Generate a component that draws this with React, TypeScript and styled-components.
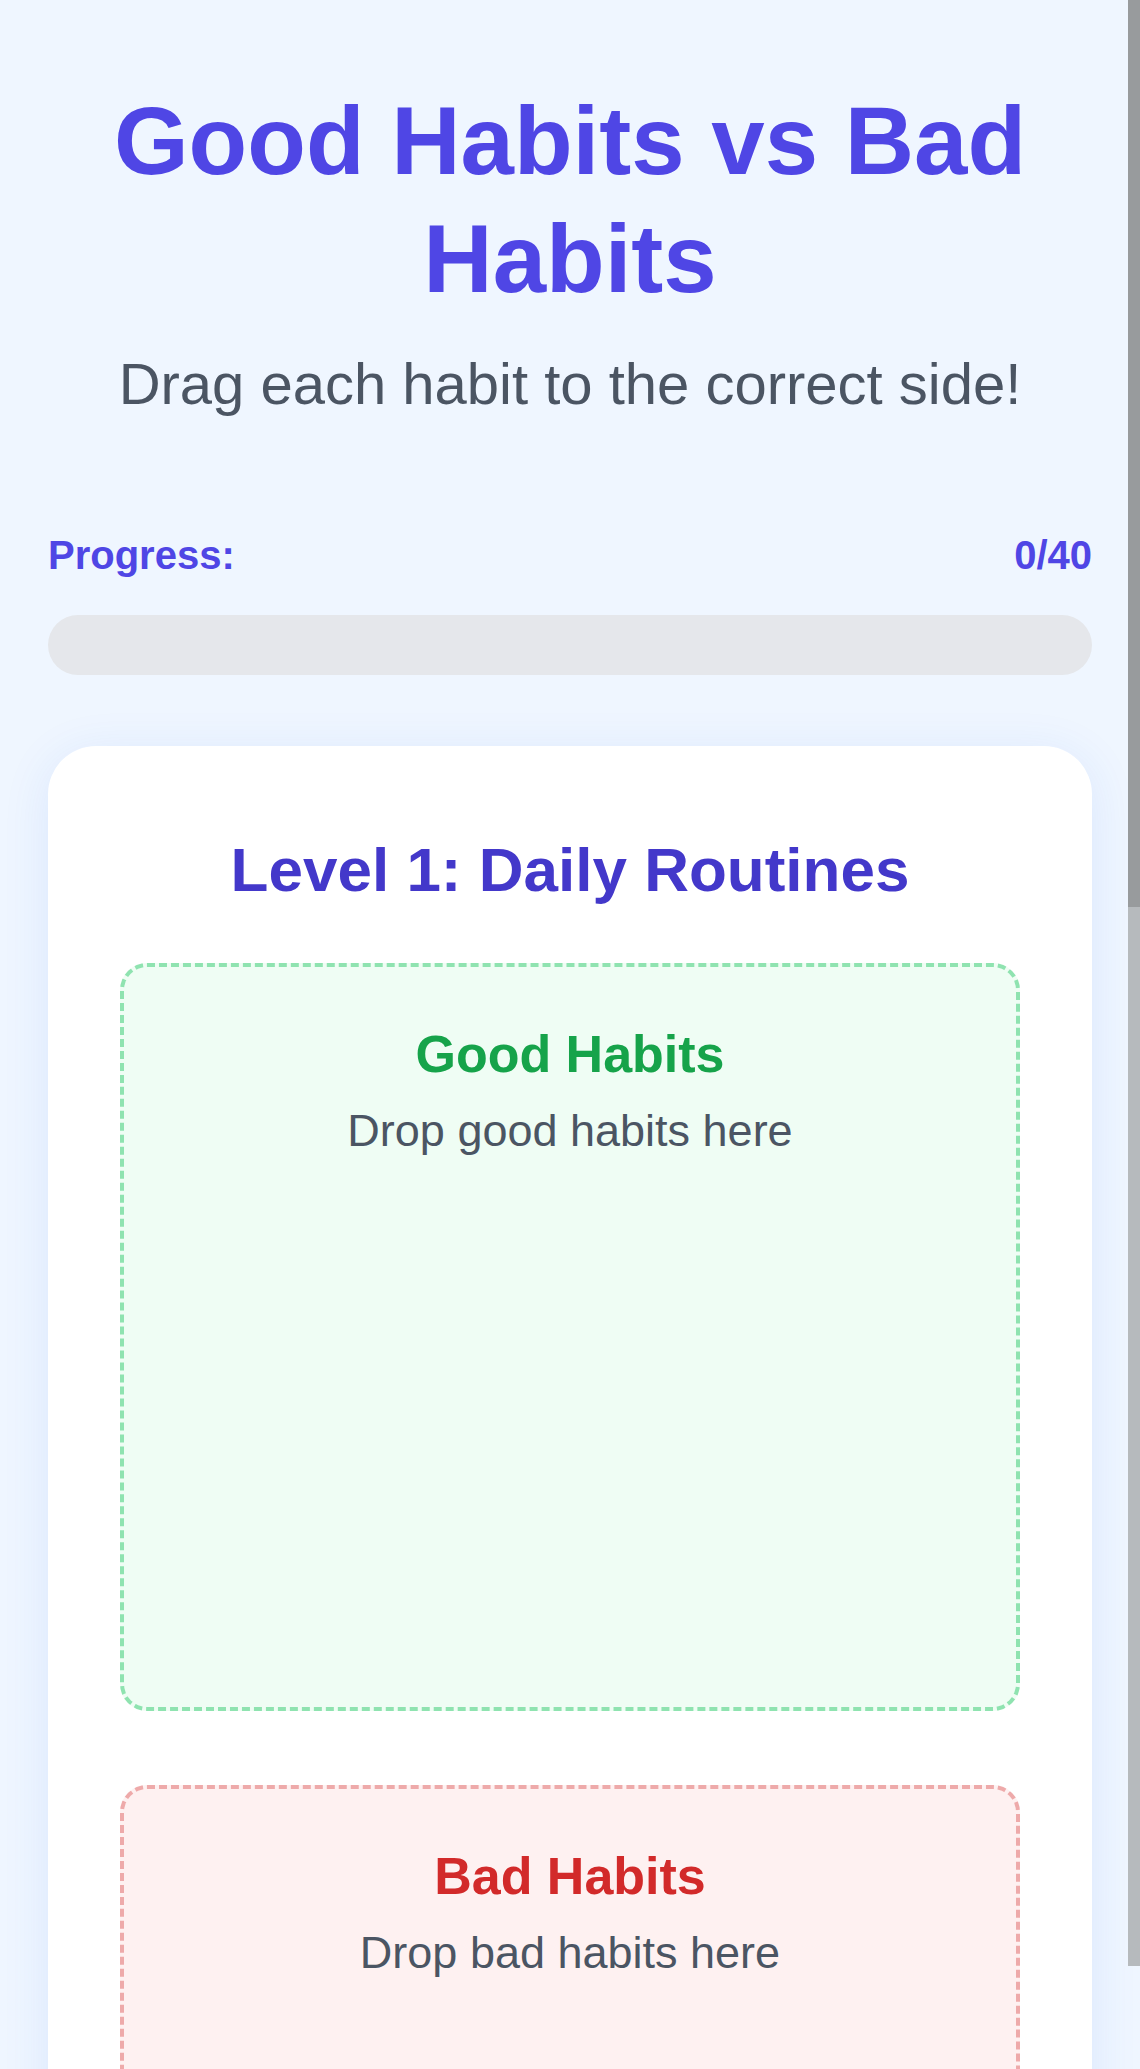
import React from 'react'
import styled, { createGlobalStyle } from 'styled-components'

const GlobalStyle = createGlobalStyle`
  html {
    scrollbar-width: none;
  }
  html::-webkit-scrollbar {
    display: none;
  }
  body {
    margin: 0;
    background-color: #eff6ff;
    font-family: "Liberation Sans", Arial, sans-serif;
  }
  * {
    box-sizing: border-box;
  }
`

const Page = styled.main`
  padding: 82px 48px 120px;
`

const Header = styled.header`
  text-align: center;
`

const Title = styled.h1`
  margin: 0;
  font-size: 96px;
  line-height: 117.5px;
  font-weight: 700;
  color: #4f46e5;
`

const Subtitle = styled.p`
  margin: 24px 0 0;
  font-size: 58px;
  line-height: 85px;
  color: #4b5563;
`

const ProgressRow = styled.div`
  display: flex;
  justify-content: space-between;
  margin-top: 99px;
  font-size: 40px;
  line-height: 60px;
  font-weight: 700;
  color: #4f46e5;
`

const ProgressTrack = styled.div`
  margin-top: 30px;
  height: 60px;
  border-radius: 999px;
  background-color: #e5e7eb;
  overflow: hidden;
`

const ProgressFill = styled.div`
  height: 100%;
  background-color: #6366f1;
`

const Card = styled.section`
  margin-top: 71px;
  padding: 77px 72px 72px;
  background-color: #ffffff;
  border-radius: 48px;
  box-shadow: 0 8px 48px rgba(37, 99, 235, 0.1);
`

const LevelTitle = styled.h2`
  margin: 0 0 47px;
  text-align: center;
  font-size: 62px;
  line-height: 93px;
  font-weight: 700;
  color: #4338ca;
`

const Zones = styled.div`
  display: flex;
  flex-direction: column;
  gap: 74px;
`

const DropZone = styled.div<{ $border: string; $bg: string }>`
  min-height: 748px;
  padding: 48px 24px;
  border: 4.5px dashed ${p => p.$border};
  border-radius: 27px;
  background-color: ${p => p.$bg};
  text-align: center;
`

const ZoneTitle = styled.h3<{ $color: string }>`
  margin: 0;
  font-size: 52px;
  line-height: 78px;
  font-weight: 700;
  color: ${p => p.$color};
`

const ZoneHint = styled.p`
  margin: 4px 0 0;
  font-size: 45px;
  line-height: 67.5px;
  color: #4b5563;
`

// page scroll indicator drawn over the right edge
const ScrollTrack = styled.div`
  position: fixed;
  top: 0;
  right: 0;
  width: 12px;
  height: 1966px;
  background-color: #b6babd;
`

const ScrollThumb = styled.div`
  height: 907px;
  background-color: #989b9d;
`

const zones = [
  {
    key: 'good',
    title: 'Good Habits',
    hint: 'Drop good habits here',
    border: '#8fe3b0',
    bg: '#effdf4',
    color: '#16a34a'
  },
  {
    key: 'bad',
    title: 'Bad Habits',
    hint: 'Drop bad habits here',
    border: '#eeaaaa',
    bg: '#fef1f1',
    color: '#d22a2a'
  }
]

const App: React.FC = () => {
  const placed = 0
  const total = 40

  return (
    <>
      <GlobalStyle />
      <Page>
        <Header>
          <Title>Good Habits vs Bad Habits</Title>
          <Subtitle>Drag each habit to the correct side!</Subtitle>
        </Header>

        <ProgressRow>
          <span>Progress:</span>
          <span>{placed}/{total}</span>
        </ProgressRow>
        <ProgressTrack>
          <ProgressFill style={{ width: `${(placed / total) * 100}%` }} />
        </ProgressTrack>

        <Card>
          <LevelTitle>Level 1: Daily Routines</LevelTitle>
          <Zones>
            {zones.map(z => (
              <DropZone key={z.key} $border={z.border} $bg={z.bg}>
                <ZoneTitle $color={z.color}>{z.title}</ZoneTitle>
                <ZoneHint>{z.hint}</ZoneHint>
              </DropZone>
            ))}
          </Zones>
        </Card>
      </Page>
      <ScrollTrack>
        <ScrollThumb />
      </ScrollTrack>
    </>
  )
}

export default App
